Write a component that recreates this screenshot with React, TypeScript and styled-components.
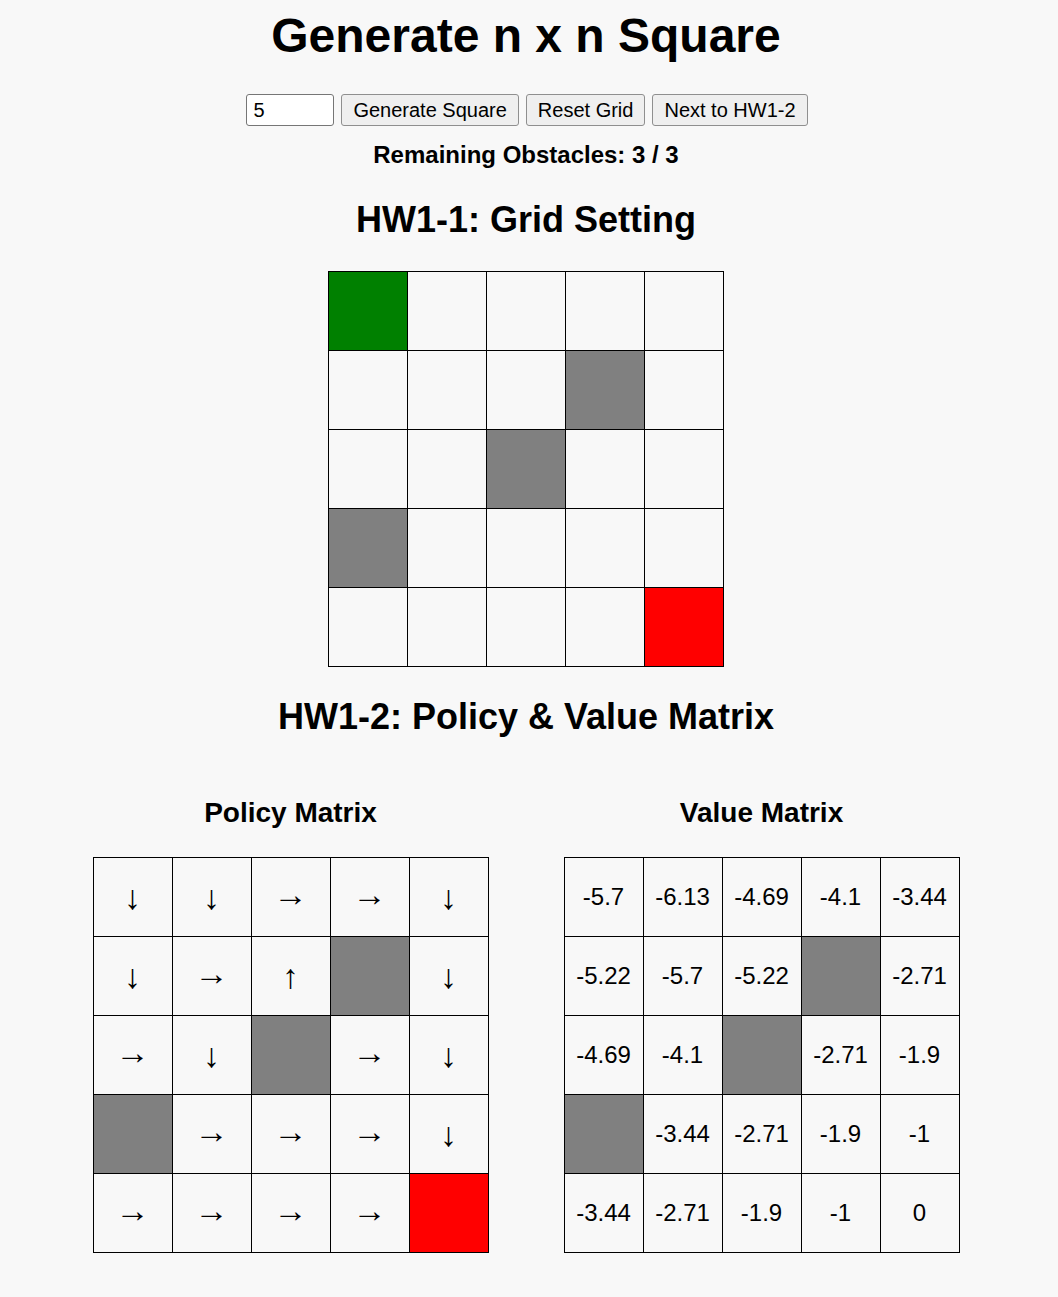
import React from "react";
import styled, { createGlobalStyle } from "styled-components";

const GlobalStyle = createGlobalStyle`
  html, body {
    margin: 0;
    padding: 0;
    background: #f8f8f8;
    font-family: "Liberation Sans", Arial, sans-serif;
    color: #000;
  }
`;

type CellKind = "empty" | "start" | "end" | "obstacle";

const Page = styled.div`
  display: flex;
  flex-direction: column;
  align-items: center;
  padding: 8px 6px 40px 0;
`;

const Title = styled.h1`
  margin: 0;
  font-size: 48px;
  font-weight: bold;
`;

const Controls = styled.div`
  display: flex;
  gap: 7px;
  margin-top: 31px;
  padding-left: 2px;
`;

const SizeInput = styled.input`
  box-sizing: border-box;
  width: 88px;
  height: 32px;
  padding: 0 6px;
  font-family: "Liberation Sans", Arial, sans-serif;
  font-size: 20px;
  background: #fff;
  border: 1px solid #767676;
  border-radius: 3px;
  color: #000;
`;

const Button = styled.button`
  box-sizing: border-box;
  height: 32px;
  padding: 0 11px;
  font-family: "Liberation Sans", Arial, sans-serif;
  font-size: 20px;
  color: #000;
  background: #efefef;
  border: 1px solid #8f8f8f;
  border-radius: 3px;
`;

const Status = styled.div`
  margin-top: 15px;
  font-size: 24px;
  font-weight: bold;
`;

const SectionTitle = styled.h2<{ $top: number; $bottom: number }>`
  margin: ${(p) => p.$top}px 0 ${(p) => p.$bottom}px;
  font-size: 36px;
  font-weight: bold;
`;

const Grid = styled.div`
  display: grid;
  grid-template-columns: repeat(5, 79px);
  grid-auto-rows: 79px;
  border-top: 1px solid #000;
  border-left: 1px solid #000;
  width: max-content;
`;

const cellColors: Record<CellKind, string> = {
  empty: "#f8f8f8",
  start: "#008000",
  end: "#ff0000",
  obstacle: "#808080",
};

const Cell = styled.div<{ $kind: CellKind }>`
  display: flex;
  align-items: center;
  justify-content: center;
  border-right: 1px solid #000;
  border-bottom: 1px solid #000;
  background: ${(p) => cellColors[p.$kind]};
  font-size: 24px;
`;

const Arrow = styled.span<{ $horizontal: boolean }>`
  font-family: "Liberation Sans", Arial, sans-serif;
  font-size: 34px;
  color: #000;
  line-height: 1;
  margin-bottom: ${(p) => (p.$horizontal ? 6 : 0)}px;
`;

const MatrixRow = styled.div`
  display: flex;
  gap: 75px;
  margin-top: 59px;
`;

const Matrix = styled.section`
  display: flex;
  flex-direction: column;
  align-items: center;
`;

const MatrixTitle = styled.h3`
  margin: 0 0 28px;
  font-size: 28px;
  font-weight: bold;
`;

const N = 5;
const obstacles = new Set(["1,3", "2,2", "3,0"]);
const kindAt = (r: number, c: number): CellKind => {
  if (r === 0 && c === 0) return "start";
  if (r === N - 1 && c === N - 1) return "end";
  if (obstacles.has(`${r},${c}`)) return "obstacle";
  return "empty";
};

const policy = [
  ["↓", "↓", "→", "→", "↓"],
  ["↓", "→", "↑", "", "↓"],
  ["→", "↓", "", "→", "↓"],
  ["", "→", "→", "→", "↓"],
  ["→", "→", "→", "→", ""],
];

const values = [
  ["-5.7", "-6.13", "-4.69", "-4.1", "-3.44"],
  ["-5.22", "-5.7", "-5.22", "", "-2.71"],
  ["-4.69", "-4.1", "", "-2.71", "-1.9"],
  ["", "-3.44", "-2.71", "-1.9", "-1"],
  ["-3.44", "-2.71", "-1.9", "-1", "0"],
];

const policyKind = (r: number, c: number): CellKind => {
  const k = kindAt(r, c);
  return k === "start" ? "empty" : k;
};

const valueKind = (r: number, c: number): CellKind => {
  return obstacles.has(`${r},${c}`) ? "obstacle" : "empty";
};

export default function App() {
  return (
    <>
      <GlobalStyle />
      <Page>
        <Title>Generate n x n Square</Title>
        <Controls>
          <SizeInput type="number" defaultValue={5} />
          <Button>Generate Square</Button>
          <Button>Reset Grid</Button>
          <Button>Next to HW1-2</Button>
        </Controls>
        <Status>Remaining Obstacles: 3 / 3</Status>
        <SectionTitle $top={30} $bottom={30}>
          HW1-1: Grid Setting
        </SectionTitle>
        <Grid>
          {Array.from({ length: N * N }, (_, i) => {
            const r = Math.floor(i / N);
            const c = i % N;
            return <Cell key={i} $kind={kindAt(r, c)} />;
          })}
        </Grid>
        <SectionTitle $top={29} $bottom={0}>
          HW1-2: Policy &amp; Value Matrix
        </SectionTitle>
        <MatrixRow>
          <Matrix>
            <MatrixTitle>Policy Matrix</MatrixTitle>
            <Grid>
              {policy.flatMap((row, r) =>
                row.map((v, c) => (
                  <Cell key={`${r}-${c}`} $kind={policyKind(r, c)}>
                    {v && (
                      <Arrow $horizontal={v === "→" || v === "←"}>{v}</Arrow>
                    )}
                  </Cell>
                ))
              )}
            </Grid>
          </Matrix>
          <Matrix>
            <MatrixTitle>Value Matrix</MatrixTitle>
            <Grid>
              {values.flatMap((row, r) =>
                row.map((v, c) => (
                  <Cell key={`${r}-${c}`} $kind={valueKind(r, c)}>
                    {v}
                  </Cell>
                ))
              )}
            </Grid>
          </Matrix>
        </MatrixRow>
      </Page>
    </>
  );
}
